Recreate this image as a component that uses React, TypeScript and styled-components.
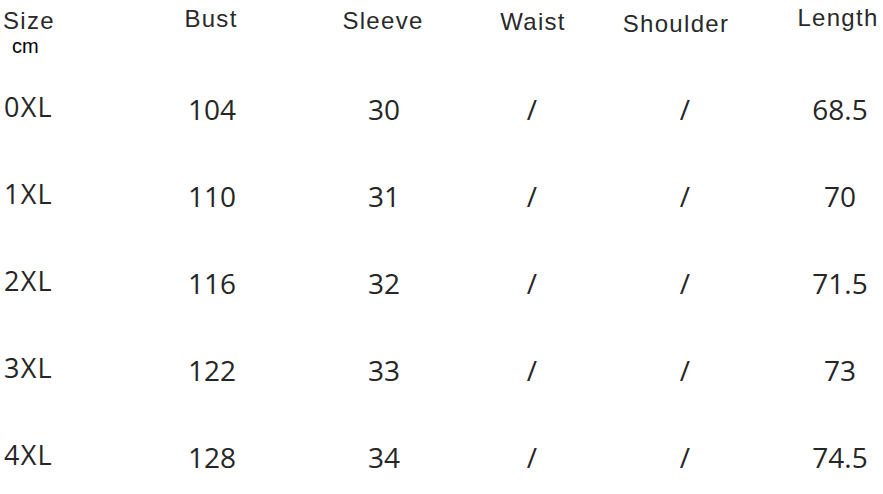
import styled, { createGlobalStyle } from "styled-components";

interface SizeRow {
    size: string,
    values: string[],
}

const rows: SizeRow[] = [
    { size: "0XL", values: ["104", "30", "/", "/", "68.5"] },
    { size: "1XL", values: ["110", "31", "/", "/", "70"] },
    { size: "2XL", values: ["116", "32", "/", "/", "71.5"] },
    { size: "3XL", values: ["122", "33", "/", "/", "73"] },
    { size: "4XL", values: ["128", "34", "/", "/", "74.5"] },
];

// header labels and how far each one sits below the row top
const headers = [
    { label: "Size", drop: 3 },
    { label: "Bust", drop: 1 },
    { label: "Sleeve", drop: 3 },
    { label: "Waist", drop: 4 },
    { label: "Shoulder", drop: 6 },
    { label: "Length", drop: 0 },
];

const headCols = "163px 96px 248px 52px 234px 90px";
const bodyCols = "147px 130px 214px 82px 224px 86px";

const GlobalStyle = createGlobalStyle`
    html, body {
        margin: 0;
        background: #ffffff;
        overflow: hidden;
    }
`;

const Sheet = styled.div`
    width: 883px;
    height: 494px;
    background: #ffffff;
    overflow: hidden;
`;

const Grid = styled.div<{ $cols: string }>`
    display: grid;
    grid-template-columns: ${props => props.$cols};
    align-items: start;
`;

const HeadCell = styled.div<{ $drop: number, $first?: boolean }>`
    display: flex;
    justify-content: ${props => props.$first ? "flex-start" : "center"};
    padding-top: ${props => 6 + props.$drop}px;
    padding-left: ${props => props.$first ? "3px" : "0"};
    font-family: "Liberation Sans", Arial, sans-serif;
    font-size: 24px;
    line-height: 24px;
    letter-spacing: 1.3px;
    color: #2a2a2a;
    white-space: nowrap;
`;

const Unit = styled.div`
    padding-left: 12px;
    font-family: "Liberation Sans", Arial, sans-serif;
    font-size: 20px;
    line-height: 20px;
    color: #000000;
`;

const Body = styled.div`
    display: grid;
    row-gap: 57px;
    padding-top: 37px;
`;

const SizeCell = styled.div`
    padding-left: 4px;
    font-family: "Open Sans", "Noto Sans", sans-serif;
    font-size: 27px;
    line-height: 27px;
    letter-spacing: 1.2px;
    color: #262626;
    white-space: nowrap;
`;

const ValueCell = styled.div`
    display: flex;
    justify-content: center;
    padding-top: 3px;
    font-family: "Open Sans", "Noto Sans", sans-serif;
    font-size: 28px;
    line-height: 27px;
    color: #262626;
    white-space: nowrap;
`;

export default function App() {
    return (
        <Sheet>
            <GlobalStyle />
            <Grid $cols={headCols}>
                {headers.map((h, i) => (
                    <HeadCell key={h.label} $drop={h.drop} $first={i === 0}>{h.label}</HeadCell>
                ))}
            </Grid>
            <Unit>cm</Unit>
            <Body>
                {rows.map(row => (
                    <Grid key={row.size} $cols={bodyCols}>
                        <SizeCell>{row.size}</SizeCell>
                        {row.values.map((v, i) => (
                            <ValueCell key={i}>{v}</ValueCell>
                        ))}
                    </Grid>
                ))}
            </Body>
        </Sheet>
    );
}
